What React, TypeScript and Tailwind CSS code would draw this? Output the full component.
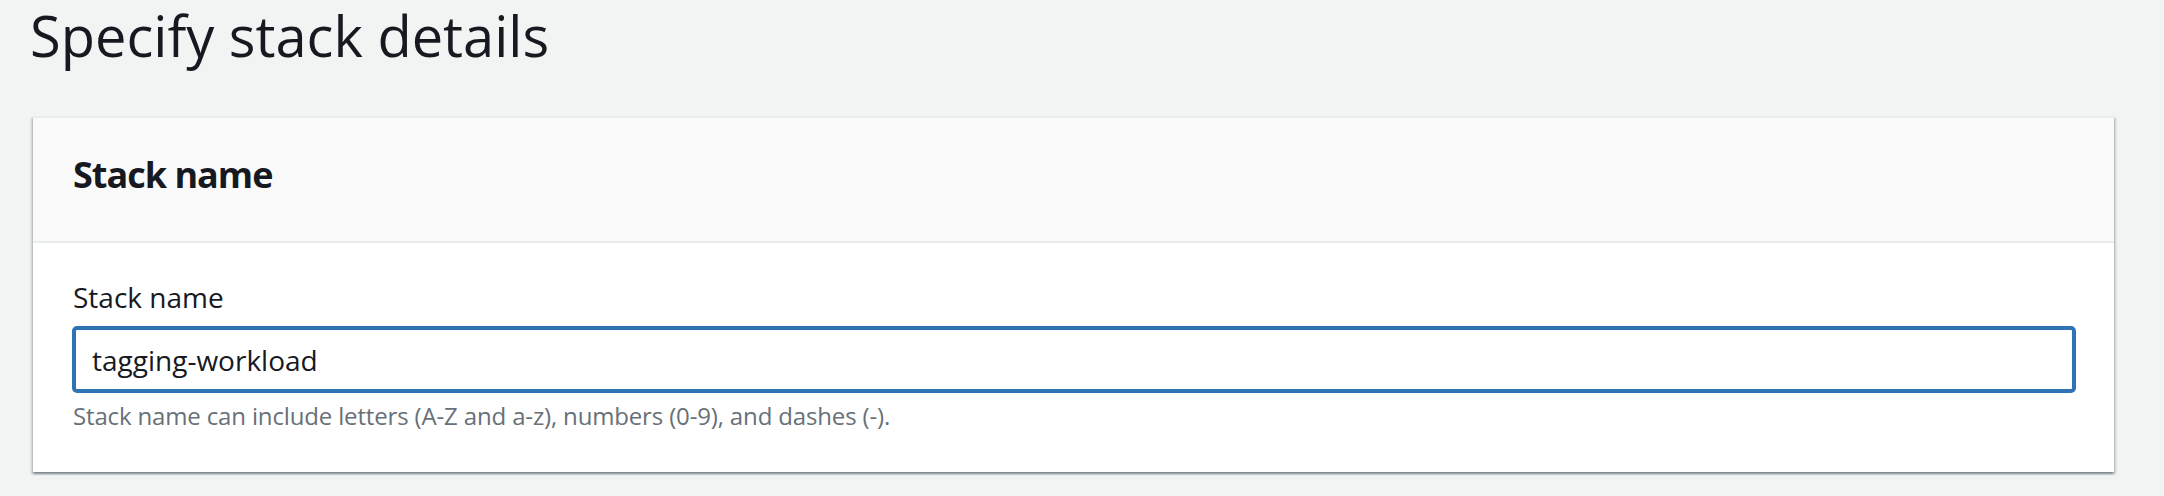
import React from "react";

export default function App() {
  return (
    <div
      className="min-h-[496px] w-full bg-[#f2f3f3] text-[#16191f]"
      style={{ fontFamily: '"Open Sans", "Noto Sans", sans-serif' }}
    >
      <h1 className="pl-[30px] text-[56px] leading-[70px] font-normal">Specify stack details</h1>
      <div className="ml-[33px] mr-[50px] mt-[46px] bg-white border-t-2 border-[#eaeded] shadow-[0_2px_2px_0_rgba(0,28,36,0.3),2px_2px_2px_0_rgba(0,28,36,0.15),-2px_2px_2px_0_rgba(0,28,36,0.15)]">
        <div className="bg-[#fafafa] border-b-2 border-[#eaeded] pl-[40px] pt-[35px] pb-[44px]">
          <h2 className="text-[36px] leading-[44px] font-bold tracking-[-1px]">Stack name</h2>
        </div>
        <div className="pl-[39px] pr-[38px] pt-[34px] pb-[40px]">
          <label className="block text-[28px] leading-[40px] pl-[1px]">Stack name</label>
          <div className="mt-[9px] h-[67px] rounded-[5px] border-[4px] border-[#3073b5] px-[16px] flex items-center">
            <span className="text-[28px] leading-[40px]">tagging-workload</span>
          </div>
          <p className="mt-[7px] pl-[1px] text-[24px] leading-[32px] text-[#687078] tracking-[-0.15px]">
            Stack name can include letters (A-Z and a-z), numbers (0-9), and dashes (-).
          </p>
        </div>
      </div>
    </div>
  );
}
